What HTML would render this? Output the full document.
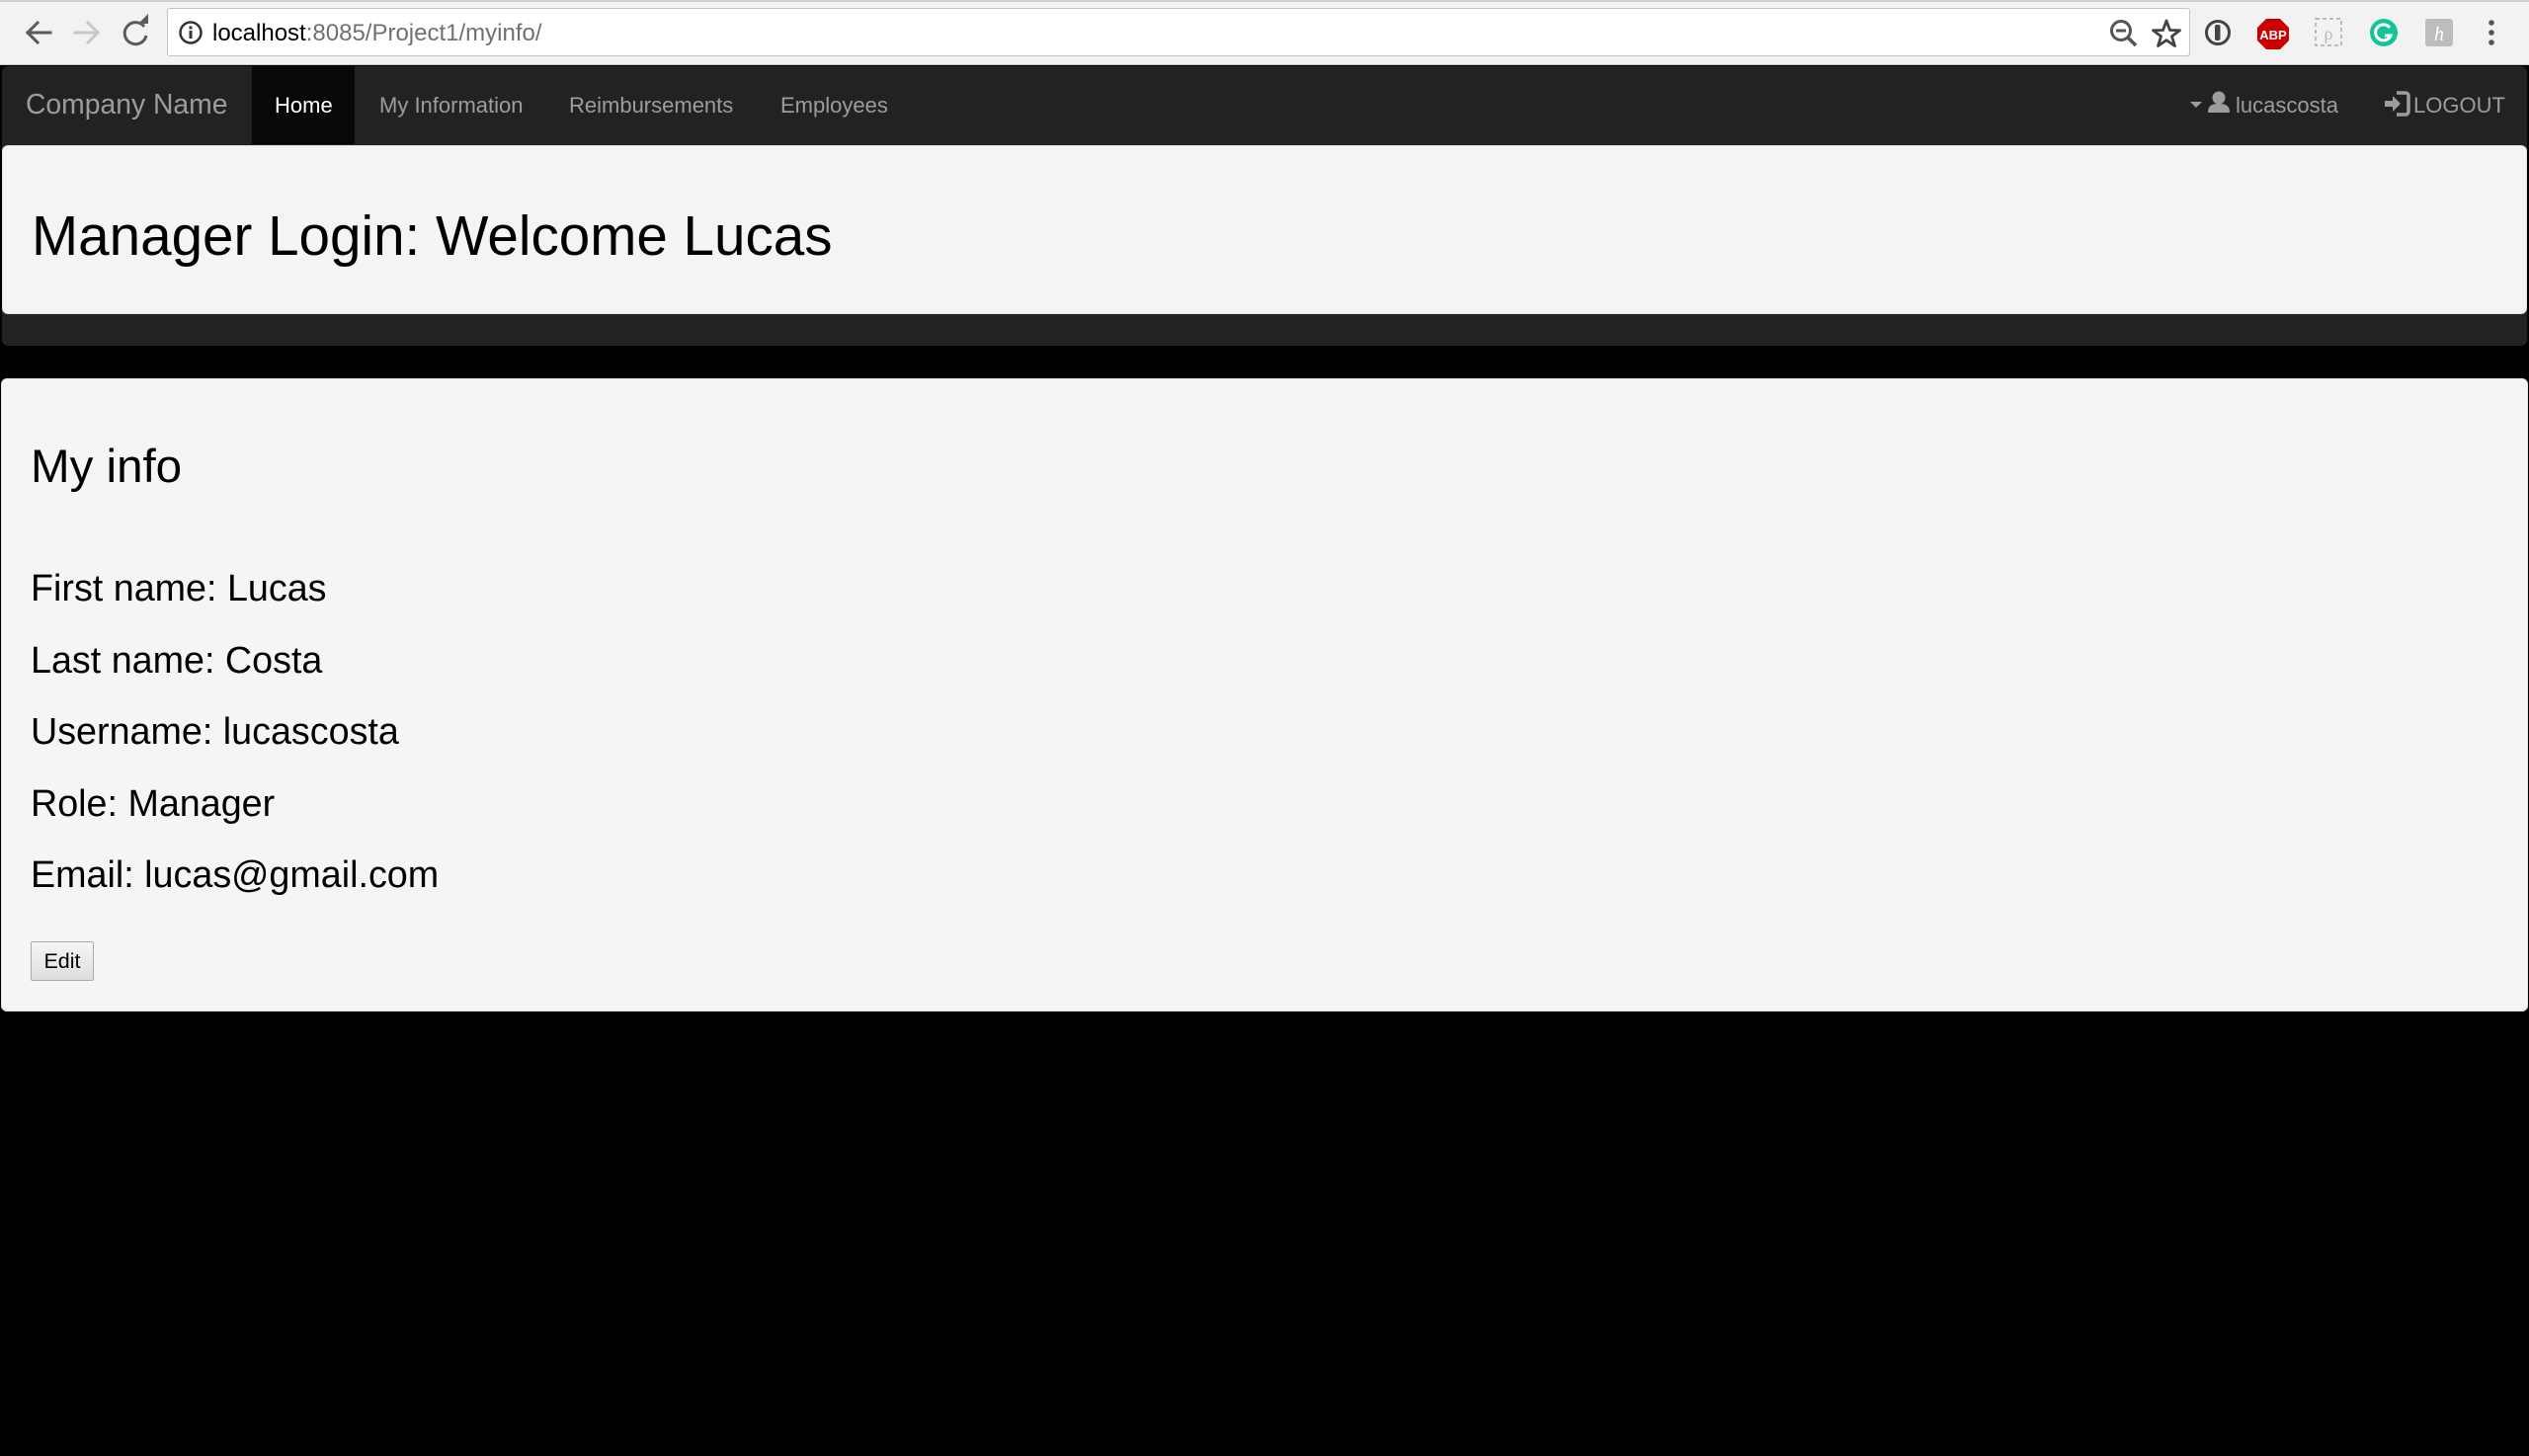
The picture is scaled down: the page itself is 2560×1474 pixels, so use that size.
<!DOCTYPE html>
<html><head><meta charset="utf-8">
<style>
*{margin:0;padding:0;box-sizing:border-box}
html,body{width:2560px;height:1474px;background:#000;overflow:hidden;font-family:"Liberation Sans",Arial,sans-serif}
.abs{position:absolute}
#chrome{left:0;top:0;width:2560px;height:66px;background:#f2f2f2;border-bottom:1px solid #c8c8c8}
#tabline{left:0;top:0;width:2560px;height:2px;background:#cfcfcf}
#addr{left:169px;top:8px;width:2048px;height:49px;background:#fff;border:1px solid #c4c4c4;border-radius:3px}
#url{left:215px;top:20px;font-size:24px;color:#000;white-space:nowrap}
#url span{color:#707070}
#nav{left:2px;top:67px;width:2556px;height:283px;background:#222;border-radius:6px}
#home{left:255px;top:67px;width:104px;height:79px;background:#080808}
.ni{top:94px;font-size:22px;color:#9d9d9d;white-space:nowrap}
#brand{left:26px;top:89px;font-size:28.3px;color:#9d9d9d}
#jumbo{left:2px;top:147px;width:2556px;height:171px;background:#f4f4f4;border:1px solid #e3e3e3;border-radius:6px}
#h1{left:32px;top:206px;font-size:56.6px;color:#000;white-space:nowrap}
#panel{left:1px;top:383px;width:2558px;height:641px;background:#f5f5f5;border:1px solid #e3e3e3;border-radius:6px}
#h2{left:31px;top:445px;font-size:47.5px;color:#000}
.row{left:31px;font-size:37.7px;color:#000;white-space:nowrap}
#edit{left:31px;top:953px;width:64px;height:40px;border:1px solid #a9a9a9;border-radius:2px;background:linear-gradient(#f6f6f6,#dedede);font-size:21.5px;color:#000;text-align:center;line-height:38px}
</style></head><body>
<div id="chrome" class="abs"></div>
<div id="tabline" class="abs"></div>
<svg class="abs" style="left:0;top:0" width="170" height="66">
 <g fill="none" stroke="#5a5a5a" stroke-width="3" stroke-linecap="square">
  <path d="M28 33H51M28 33l10-10M28 33l10 10"/>
 </g>
 <g fill="none" stroke="#c8c8c8" stroke-width="3" stroke-linecap="square">
  <path d="M99 33H76M99 33l-10-10M99 33l-10 10"/>
 </g>
 <path d="M146 27a11 11 0 1 0 2 9" fill="none" stroke="#5a5a5a" stroke-width="3"/>
 <path d="M140 24l10 0 0-10z" fill="#5a5a5a"/>
</svg>
<div id="addr" class="abs"></div>
<svg class="abs" style="left:180px;top:20px" width="26" height="26"><circle cx="13" cy="13" r="10.5" fill="none" stroke="#333" stroke-width="2.5"/><rect x="11.5" y="11" width="3" height="8" fill="#333"/><rect x="11.5" y="6.5" width="3" height="3" fill="#333"/></svg>
<div id="url" class="abs">localhost<span>:8085/Project1/myinfo/</span></div>
<svg class="abs" style="left:2130px;top:14px" width="430" height="40">
 <circle cx="17" cy="17" r="9.5" fill="none" stroke="#555" stroke-width="3"/><path d="M12 17h10" stroke="#555" stroke-width="3"/><path d="M24 24l8 8" stroke="#555" stroke-width="3.5"/>
 <path d="M63 7l3.5 9.5 10 .3-8 6 3 9.7-8.5-5.8-8.5 5.8 3-9.7-8-6 10-.3z" fill="none" stroke="#444" stroke-width="2.8" stroke-linejoin="round"/>
 <circle cx="115" cy="19" r="11.5" fill="none" stroke="#444" stroke-width="3"/><rect x="112" y="11" width="5.5" height="16" rx="2" fill="#444"/>
 <path d="M164 5h14l9 9v13l-9 9h-14l-9-9v-13z" fill="#cc0000"/>
 <text x="171" y="26" font-family="Liberation Sans,Arial" font-weight="bold" font-size="13" fill="#fff" text-anchor="middle">ABP</text>
 <rect x="214" y="5" width="26" height="27" fill="none" stroke="#aaa" stroke-width="1.5" stroke-dasharray="4 3"/>
 <text x="227" y="26" font-size="18" fill="#bbb" text-anchor="middle" font-family="Liberation Serif">ρ</text>
 <circle cx="283" cy="19" r="14" fill="#15c39a"/><path d="M289 14a8 8 0 1 0 1 8h-6" fill="none" stroke="#fff" stroke-width="3"/>
 <rect x="325" y="5" width="28" height="28" rx="3" fill="#bdbdbd"/><text x="339" y="27" font-size="20" fill="#fff" text-anchor="middle" font-family="Liberation Serif" font-style="italic">h</text>
 <circle cx="392" cy="9" r="2.8" fill="#555"/><circle cx="392" cy="19" r="2.8" fill="#555"/><circle cx="392" cy="29" r="2.8" fill="#555"/>
</svg>

<div id="nav" class="abs"></div>
<div id="home" class="abs"></div>
<div id="brand" class="abs">Company Name</div>
<div class="abs ni" style="left:278px;color:#fff">Home</div>
<div class="abs ni" style="left:384px">My Information</div>
<div class="abs ni" style="left:576px">Reimbursements</div>
<div class="abs ni" style="left:790px">Employees</div>
<svg class="abs" style="left:2214px;top:90px" width="50" height="28">
 <path d="M3 13h12l-6 6z" fill="#9d9d9d"/>
 <circle cx="32" cy="9" r="6.5" fill="#9d9d9d"/><path d="M21 24c0-7 4-9 11-9s11 2 11 9z" fill="#9d9d9d"/>
</svg>
<div class="abs ni" style="left:2263px">lucascosta</div>
<svg class="abs" style="left:2412px;top:92px" width="30" height="26">
 <path d="M14 2h9a3 3 0 0 1 3 3v16a3 3 0 0 1-3 3h-9" fill="none" stroke="#9d9d9d" stroke-width="3.5"/>
 <path d="M2 10h8v-5l8 8-8 8v-5h-8z" fill="#9d9d9d"/>
</svg>
<div class="abs ni" style="left:2443px">LOGOUT</div>

<div id="jumbo" class="abs"></div>
<div id="h1" class="abs">Manager Login: Welcome Lucas</div>

<div id="panel" class="abs"></div>
<div id="h2" class="abs">My info</div>
<div class="abs row" style="top:574px">First name: Lucas</div>
<div class="abs row" style="top:647px">Last name: Costa</div>
<div class="abs row" style="top:719px">Username: lucascosta</div>
<div class="abs row" style="top:792px">Role: Manager</div>
<div class="abs row" style="top:864px">Email: lucas@gmail.com</div>
<div id="edit" class="abs">Edit</div>
</body></html>
